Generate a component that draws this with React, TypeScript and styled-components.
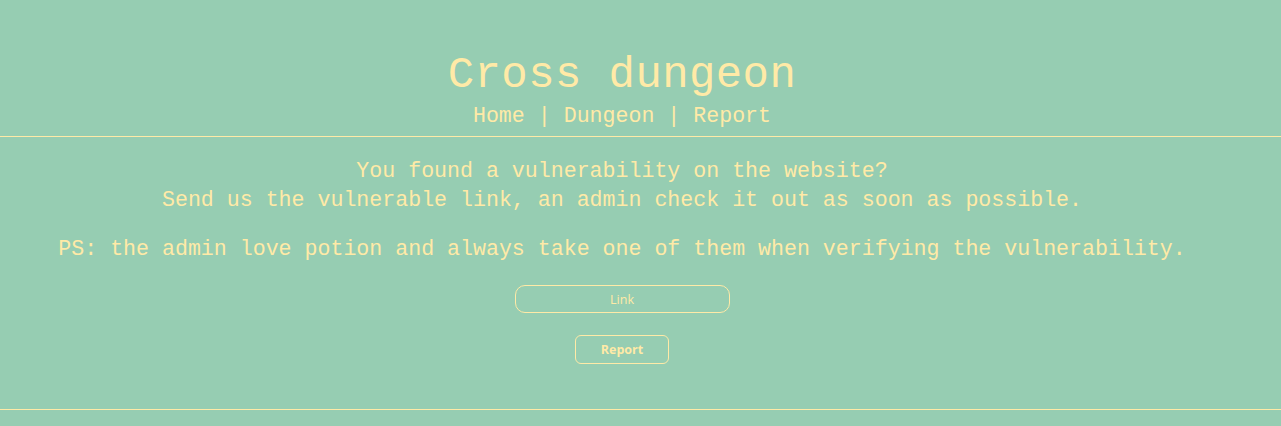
import React from 'react'
import styled, { createGlobalStyle } from 'styled-components'

const bg = '#96cdb2'
const ink = '#ffeaa7'

const GlobalStyle = createGlobalStyle`
  html, body {
    margin: 0;
    padding: 0;
    background: ${bg};
  }
  body {
    font-family: "Liberation Mono", "DejaVu Sans Mono", monospace;
    color: ${ink};
  }
`

const Page = styled.div`
  display: flex;
  flex-direction: column;
`

const Header = styled.header`
  display: flex;
  flex-direction: column;
  align-items: center;
  gap: 2px;
  padding: 50px 37px 5px 0;
`

const Title = styled.h1`
  margin: 0;
  font-size: 44px;
  line-height: 50px;
  font-weight: normal;
  letter-spacing: 0.4px;
`

const Nav = styled.nav`
  font-size: 21.6px;
  line-height: 29px;
  white-space: pre;
`

const NavLink = styled.a`
  color: ${ink};
  text-decoration: none;
`

const Rule = styled.hr`
  margin: 0;
  border: none;
  height: 1px;
  background: ${ink};
`

const Main = styled.main`
  display: flex;
  flex-direction: column;
  align-items: center;
  padding: 20px 37px 45px 0;
`

const Text = styled.p<{ $gap?: number }>`
  margin: ${({ $gap }) => $gap ?? 0}px 0 0;
  font-size: 21.6px;
  line-height: 29px;
  text-align: center;
  white-space: pre;
`

const Form = styled.form`
  display: flex;
  flex-direction: column;
  align-items: center;
  gap: 22px;
  margin-top: 21px;
`

const LinkInput = styled.input`
  box-sizing: border-box;
  width: 215px;
  height: 28px;
  border: 1px solid ${ink};
  border-radius: 10px;
  background: transparent;
  color: ${ink};
  text-align: center;
  font-family: "Open Sans", "Noto Sans", sans-serif;
  font-size: 12.5px;
  outline: none;

  &::placeholder {
    color: ${ink};
    opacity: 1;
  }
`

const ReportButton = styled.button`
  box-sizing: border-box;
  width: 94px;
  height: 29px;
  border: 1px solid ${ink};
  border-radius: 6px;
  background: transparent;
  color: ${ink};
  font-family: "Open Sans", "Noto Sans", sans-serif;
  font-weight: 700;
  font-size: 12.5px;
  cursor: pointer;
`

export default function App() {
  return (
    <Page>
      <GlobalStyle />
      <Header>
        <Title>Cross dungeon</Title>
        <Nav>
          <NavLink href="#">Home</NavLink> | <NavLink href="#">Dungeon</NavLink> | <NavLink href="#">Report</NavLink>
        </Nav>
      </Header>
      <Rule />
      <Main>
        <Text>You found a vulnerability on the website?</Text>
        <Text>Send us the vulnerable link, an admin check it out as soon as possible.</Text>
        <Text $gap={20}>PS: the admin love potion and always take one of them when verifying the vulnerability.</Text>
        <Form onSubmit={(e) => e.preventDefault()}>
          <LinkInput type="text" placeholder="Link" />
          <ReportButton type="submit">Report</ReportButton>
        </Form>
      </Main>
      <Rule />
    </Page>
  )
}
